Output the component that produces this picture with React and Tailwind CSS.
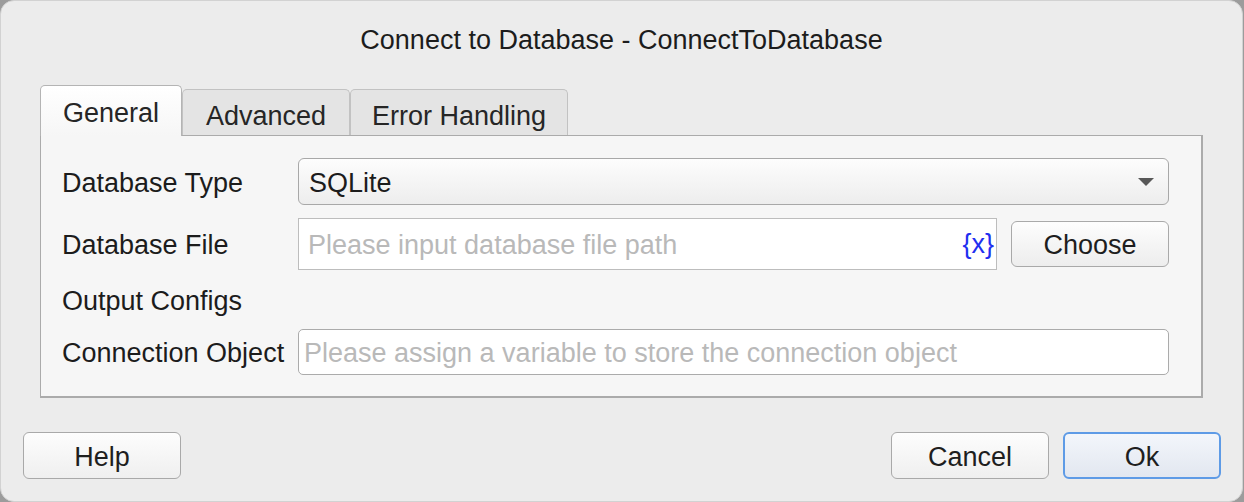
import React from "react";

const font = { fontFamily: '"Liberation Sans", Arial, sans-serif' };

function Btn({ children, primary }) {
  return (
    <button
      className={
        primary
          ? "h-[47px] w-[158px] rounded-[6px] border-[2px] border-[#5e9be6] bg-gradient-to-b from-[#f3f6fb] to-[#e2e7f0] pt-[3px] text-[27px] text-[#1e1e1e]"
          : "h-[47px] w-[158px] rounded-[6px] border border-[#a9a9a9] bg-gradient-to-b from-[#fdfdfd] to-[#efefef] pt-[3px] text-[27px] text-[#1e1e1e]"
      }
    >
      {children}
    </button>
  );
}

export default function App() {
  return (
    <div className="h-[502px] w-[1244px] bg-[#9c9c9c]" style={font}>
      <div className="flex h-full w-[1243px] flex-col rounded-[14px] border border-[#d2d2d2] bg-[#ececec]">
        <div className="pt-[24px] text-center text-[27px] leading-[30px] text-[#1c1c1c]">
          Connect to Database - ConnectToDatabase
        </div>

        <div className="mt-[30px] px-[39px]">
          <div className="flex items-end">
            <div className="relative z-10 -mb-[1px] flex h-[51px] w-[142px] items-center justify-center rounded-t-[5px] border border-b-0 border-[#b4b4b4] bg-gradient-to-b from-[#ffffff] to-[#f6f6f6] pt-[5px] text-[27px] text-[#262626]">
              General
            </div>
            <div className="flex h-[46px] w-[168px] items-center justify-center rounded-t-[5px] border border-b-0 border-[#c2c2c2] bg-[#e4e4e4] pt-[7px] text-[27px] text-[#262626]">
              Advanced
            </div>
            <div className="flex h-[46px] w-[218px] items-center justify-center rounded-t-[5px] border border-b-0 border-[#c2c2c2] bg-[#e4e4e4] pt-[7px] text-[27px] text-[#262626]">
              Error Handling
            </div>
          </div>

          <div className="flex h-[263px] flex-col border border-b-2 border-r-2 border-[#ababab] bg-[#f6f6f6] pl-[21px] pr-[32px] pt-[22px] text-[27px] text-[#1c1c1c]">
            <div className="flex h-[47px] items-center">
              <div className="w-[236px] pt-[4px]">Database Type</div>
              <div className="flex h-[47px] flex-1 items-center justify-between rounded-[6px] border border-[#a8a8a8] bg-gradient-to-b from-[#fdfdfd] to-[#ededed] pl-[10px] pr-[14px]">
                <span className="pt-[3px]">SQLite</span>
                <svg width="16" height="8" viewBox="0 0 16 8">
                  <polygon points="0,0 16,0 8,8" fill="#585858" />
                </svg>
              </div>
            </div>

            <div className="mt-[13px] flex h-[52px] items-center">
              <div className="w-[236px] pt-[3px]">Database File</div>
              <div className="flex h-[52px] flex-1 items-center justify-between border border-[#bdbdbd] bg-white pl-[9px] pr-[2px]">
                <span className="pt-[2px] text-[#b9b9b9]">Please input database file path</span>
                <span className="text-[27px] text-[#1f2ff0]">{"{x}"}</span>
              </div>
              <div className="ml-[14px]">
                <button className="h-[46px] w-[158px] rounded-[6px] border border-[#a9a9a9] bg-gradient-to-b from-[#fdfdfd] to-[#ededed] pt-[3px] text-[27px] text-[#1e1e1e]">
                  Choose
                </button>
              </div>
            </div>

            <div className="flex h-[59px] items-center pt-[3px]">Output Configs</div>

            <div className="flex h-[46px] items-center">
              <div className="w-[236px] pt-[3px]">Connection Object</div>
              <div className="flex h-[46px] flex-1 items-center rounded-[5px] border border-[#ababab] bg-white pl-[5px]">
                <span className="pt-[2px] text-[#b9b9b9]">
                  Please assign a variable to store the connection object
                </span>
              </div>
            </div>
          </div>
        </div>

        <div className="mt-[34px] flex items-center justify-between pl-[22px] pr-[21px]">
          <Btn>Help</Btn>
          <div className="flex gap-[14px]">
            <Btn>Cancel</Btn>
            <Btn primary>Ok</Btn>
          </div>
        </div>
      </div>
    </div>
  );
}
